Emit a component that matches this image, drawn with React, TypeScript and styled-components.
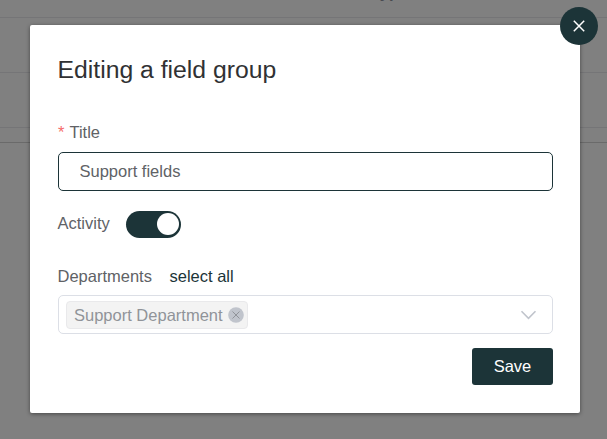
import React, { useState } from "react";
import styled, { createGlobalStyle } from "styled-components";

const accent = "#1c3438";

const GlobalStyle = createGlobalStyle`
  * { box-sizing: border-box; }
  html, body { margin: 0; height: 100%; overflow: hidden; }
  body, button, input { font-family: "Liberation Sans", Arial, sans-serif; }
`;

const Page = styled.div`
  position: relative;
  height: 439px;
  overflow: hidden;
  background: #808080;
`;

const TableRow = styled.div<{ $height: number; $line: string }>`
  height: ${(p) => p.$height}px;
  border-bottom: 1px solid ${(p) => p.$line};
`;

const HeaderCell = styled.div`
  height: 18px;
  margin: 0 0 0 371px;
  transform: translateY(-17px);
  font-size: 16.5px;
  line-height: 18px;
  font-weight: 700;
  color: #484a50;
`;

const Dialog = styled.section`
  position: absolute;
  left: 30px;
  top: 25px;
  width: 550px;
  height: 388px;
  padding: 29px 27px 0 28px;
  background: #fff;
  border-radius: 2px;
  box-shadow: 0 1px 4px rgba(0, 0, 0, 0.45);
`;

const CloseButton = styled.button`
  position: absolute;
  top: -18px;
  right: -18px;
  width: 38px;
  height: 38px;
  padding: 0;
  border: 0;
  border-radius: 50%;
  background: ${accent};
  display: flex;
  align-items: center;
  justify-content: center;
`;

const Heading = styled.h1`
  margin: 0 0 0 -0.5px;
  font-size: 24.75px;
  line-height: 32px;
  font-weight: 400;
  color: #303133;
`;

const Label = styled.span`
  font-size: 16.5px;
  line-height: 20px;
  color: #606266;
`;

const TitleField = styled.label`
  display: flex;
  flex-direction: column;
  gap: 10px;
  margin-top: 36px;
`;

const Required = styled.span`
  margin-right: 5px;
  color: #f56c6c;
`;

const TextInput = styled.input`
  width: 100%;
  height: 39px;
  padding: 0 20.5px;
  border: 1px solid ${accent};
  border-radius: 5px;
  outline: none;
  background: #fff;
  font-size: 16.5px;
  color: #606266;
`;

const ActivityField = styled.div`
  display: flex;
  align-items: center;
  gap: 16px;
  height: 27px;
  margin-top: 20px;
`;

const ActivityLabel = styled(Label)`
  margin-left: -0.5px;
  padding-bottom: 4px;
`;

const Switch = styled.button<{ $on: boolean }>`
  display: flex;
  align-items: center;
  justify-content: ${(p) => (p.$on ? "flex-end" : "flex-start")};
  width: 55px;
  height: 27px;
  padding: 0 2px 1px;
  border: 0;
  border-radius: 14px;
  background: ${(p) => (p.$on ? accent : "#dcdfe6")};
`;

const Knob = styled.span`
  width: 22px;
  height: 22px;
  border-radius: 50%;
  background: #fff;
`;

const DepartmentsHeader = styled.div`
  display: flex;
  gap: 17.5px;
  margin: 28px 0 0 -0.5px;
`;

const SelectAll = styled(Label)`
  color: ${accent};
`;

const Select = styled.div`
  display: flex;
  align-items: center;
  justify-content: space-between;
  height: 39px;
  margin-top: 9px;
  padding: 0 15px 0 7px;
  border: 1px solid #dcdfe6;
  border-radius: 5px;
`;

const Tag = styled.span`
  display: flex;
  align-items: center;
  justify-content: space-between;
  width: 182px;
  height: 28px;
  padding: 0 3px 0 7px;
  border: 1px solid #e9e9eb;
  border-radius: 4px;
  background: #f3f3f3;
  font-size: 16.5px;
  color: #909399;
`;

const TagText = styled.span`
  padding-top: 2px;
`;

const Footer = styled.div`
  display: flex;
  justify-content: flex-end;
  margin-top: 14px;
`;

const SaveButton = styled.button`
  width: 81px;
  height: 37px;
  padding: 0;
  border: 0;
  border-radius: 3px;
  background: ${accent};
  font-size: 16.5px;
  color: #fff;
`;

export default function App() {
  const [active, setActive] = useState(true);
  const [title, setTitle] = useState("Support fields");
  return (
    <>
      <GlobalStyle />
      <Page>
        <TableRow $height={18} $line="#757577">
          <HeaderCell>Type</HeaderCell>
        </TableRow>
        <TableRow $height={55} $line="#757577" />
        <TableRow $height={55} $line="#757577" />
        <TableRow $height={15} $line="#6a6a6a" />
        <Dialog role="dialog">
          <CloseButton aria-label="Close">
            <svg width="12" height="12" viewBox="0 0 12 12" fill="none" stroke="#fff" strokeWidth="1.5">
              <path d="M.8.8 11.2 11.2M11.2.8.8 11.2" />
            </svg>
          </CloseButton>
          <Heading>Editing a field group</Heading>
          <TitleField>
            <Label>
              <Required>*</Required>Title
            </Label>
            <TextInput value={title} onChange={(e) => setTitle(e.target.value)} />
          </TitleField>
          <ActivityField>
            <ActivityLabel>Activity</ActivityLabel>
            <Switch $on={active} role="switch" aria-checked={active} onClick={() => setActive(!active)}>
              <Knob />
            </Switch>
          </ActivityField>
          <DepartmentsHeader>
            <Label>Departments</Label>
            <SelectAll>select all</SelectAll>
          </DepartmentsHeader>
          <Select>
            <Tag>
              <TagText>Support Department</TagText>
              <svg width="16" height="16" viewBox="0 0 16 16">
                <circle cx="8" cy="8" r="7.8" fill="#c0c4cc" />
                <path d="m4.5 4.5 7 7m0-7-7 7" stroke="#909399" strokeWidth="1" />
              </svg>
            </Tag>
            <svg width="17" height="10" viewBox="0 0 17 10" fill="none" stroke="#c0c4cc" strokeWidth="1.6">
              <path d="m1.5 1.3 7 7 7-7" />
            </svg>
          </Select>
          <Footer>
            <SaveButton>Save</SaveButton>
          </Footer>
        </Dialog>
      </Page>
    </>
  );
}
